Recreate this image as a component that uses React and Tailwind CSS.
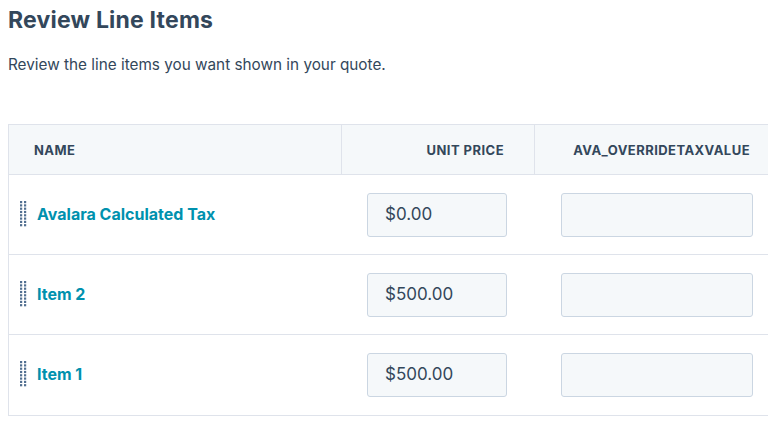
import React from "react";

function DragHandle() {
  const dots = [];
  for (let r = 0; r < 8; r++) {
    for (let c = 0; c < 2; c++) {
      dots.push(<rect key={`${r}-${c}`} x={c * 4} y={r * 3.3} width="2.2" height="2.2" fill="#516f90" />);
    }
  }
  return (
    <svg width="7" height="26" viewBox="0 0 7 26" className="shrink-0">
      {dots}
    </svg>
  );
}

const rows = [
  { name: "Avalara Calculated Tax", price: "$0.00" },
  { name: "Item 2", price: "$500.00" },
  { name: "Item 1", price: "$500.00" },
];

export default function App() {
  return (
    <div className="w-[768px] h-[424px] overflow-hidden bg-white text-[#33475b]" style={{ fontFamily: "Inter, 'Noto Sans', sans-serif" }}>
      <div className="pl-2 pt-[4px]">
        <h1 className="text-[23px] leading-[32px] font-bold tracking-[0.2px]">Review Line Items</h1>
        <p className="mt-[19px] text-[15.3px] leading-[20px]">Review the line items you want shown in your quote.</p>
        <div className="mt-[49px] w-[771px] border-l border-t border-b border-[#dfe3eb]">
          <div className="grid grid-cols-[332px_193px_246px] h-[50px] bg-[#f5f8fa] border-b border-[#dfe3eb] text-[13px] font-bold tracking-[0.45px]">
            <div className="flex items-center pl-[25px] pt-[3px]">NAME</div>
            <div className="flex items-center justify-end pr-[30px] pt-[3px] border-l border-[#dfe3eb]">UNIT PRICE</div>
            <div className="flex items-center justify-end pr-[30px] pt-[3px] border-l border-[#dfe3eb]">AVA_OVERRIDETAXVALUE</div>
          </div>
          {rows.map((row, i) => (
            <div
              key={i}
              className={`grid grid-cols-[332px_193px_246px] h-[80px] ${i < rows.length - 1 ? "border-b border-[#dfe3eb]" : ""}`}
            >
              <div className="flex items-center pl-[11px] gap-[10px] pb-[2px]">
                <DragHandle />
                <span className="text-[16px] font-bold text-[#0091ae]">{row.name}</span>
              </div>
              <div className="flex items-center pl-[26px] pr-[27px]">
                <div className="w-full h-[44px] rounded-[3px] border border-[#cbd6e2] bg-[#f5f8fa] flex items-center pl-[17px] text-[17px]">
                  {row.price}
                </div>
              </div>
              <div className="flex items-center pl-[27px] pr-[27px]">
                <div className="w-full h-[44px] rounded-[3px] border border-[#cbd6e2] bg-[#f5f8fa]" />
              </div>
            </div>
          ))}
        </div>
      </div>
    </div>
  );
}
